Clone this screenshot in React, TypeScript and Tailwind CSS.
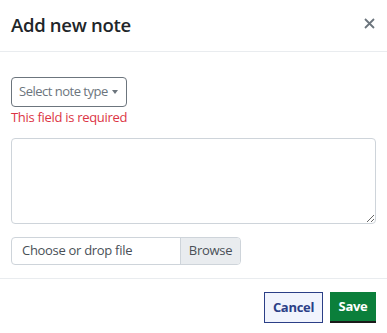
export default function App() {
  return (
    <div className="w-[387px] h-[333px] bg-white text-[#212529] overflow-hidden" style={{ fontFamily: '"Open Sans", "Noto Sans", sans-serif' }}>
      {/* header */}
      <div className="h-[52px] flex items-center justify-between pl-[11px] pr-[12px] border-b border-[#e9ecef]">
        <h2 className="text-[18.5px] font-semibold leading-none tracking-[-0.3px]">Add new note</h2>
        <button className="text-[#6c757d] -mt-[4px]" aria-label="Close">
          <svg width="11" height="11" viewBox="0 0 11 11" fill="none" stroke="currentColor" strokeWidth="1.8">
            <path d="M1 1l9 9M10 1l-9 9" />
          </svg>
        </button>
      </div>

      {/* body */}
      <div className="px-[11px] pt-[25px]">
        <div className="w-[116px] h-[30px] flex items-center gap-[4px] pl-[7px] border border-[#6c757d] rounded-[4px] text-[13px] text-[#6c757d] tracking-[-0.5px]">
          <span>Select note type</span>
          <span className="w-0 h-0 border-l-[3.5px] border-r-[3.5px] border-t-[4px] border-l-transparent border-r-transparent border-t-[#6c757d]" />
        </div>
        <div className="mt-[2px] text-[13px] leading-[16px] text-[#dc3545] tracking-[-0.3px]">This field is required</div>

        <textarea className="mt-[13px] block w-[365px] h-[86px] border border-[#ced4da] rounded-[4px] resize-y" />

        <div className="mt-[13px] w-[230px] h-[28px] flex border border-[#ced4da] rounded-[4px] overflow-hidden text-[13px] tracking-[-0.3px]">
          <div className="flex-1 flex items-center pl-[10px] text-[#495057]">Choose or drop file</div>
          <div className="w-[60px] flex items-center justify-center bg-[#e9ecef] border-l border-[#ced4da] text-[#495057]">Browse</div>
        </div>
      </div>

      {/* footer */}
      <div className="mt-[13px] border-t border-[#e9ecef] flex justify-end gap-[7px] pt-[13px] pr-[11px]">
        <button className="w-[59px] h-[31px] bg-[#f1f4fd] border border-[#2b3f87] text-[#2b3f87] text-[13px] font-bold tracking-[-0.3px]">Cancel</button>
        <button className="w-[46px] h-[31px] bg-[#0b7f3b] border-b-2 border-[#1a1a1a] text-white text-[13px] font-bold tracking-[-0.3px]">Save</button>
      </div>
    </div>
  );
}
